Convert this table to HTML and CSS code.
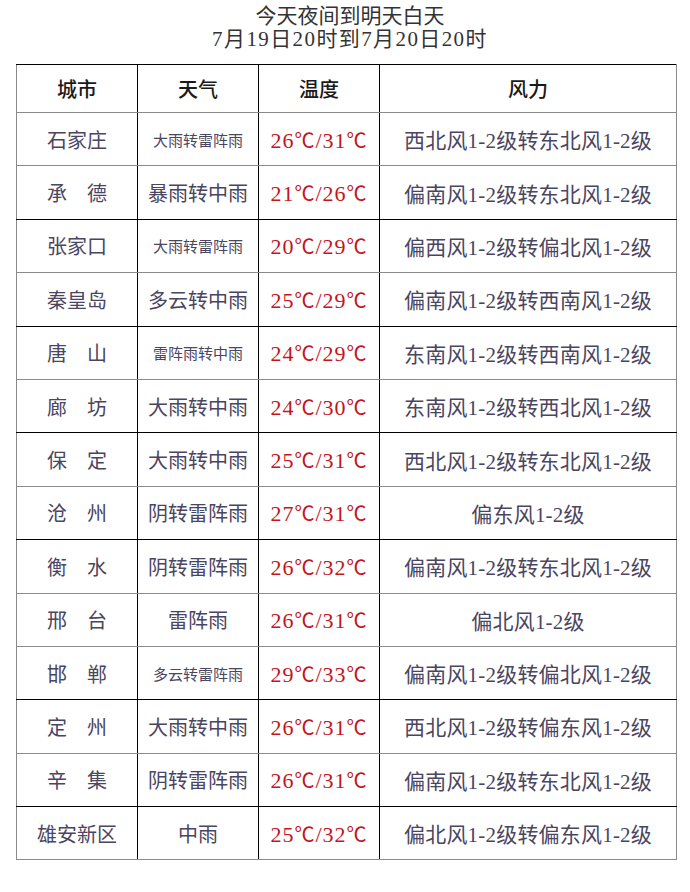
FILE: index.html
```html
<!DOCTYPE html>
<html lang="zh-CN">
<head>
<meta charset="utf-8">
<title>今天夜间到明天白天</title>
<link rel="stylesheet" href="styles.css">
</head>
<body>
<div class="page">
  <div class="title">
    <div>今天夜间到明天白天</div>
    <div class="date">7月19日20时到7月20日20时</div>
  </div>
  <table class="forecast">
    <thead>
      <tr class="head"><th>城市</th><th>天气</th><th>温度</th><th>风力</th></tr>
    </thead>
    <tbody>
      <tr><td class="city">石家庄</td><td class="wx small">大雨转雷阵雨</td><td class="temp">26<span class="deg">℃</span>/31<span class="deg">℃</span></td><td class="wind">西北风1-2级转东北风1-2级</td></tr>
      <tr class="dark"><td class="city">承　德</td><td class="wx">暴雨转中雨</td><td class="temp">21<span class="deg">℃</span>/26<span class="deg">℃</span></td><td class="wind">偏南风1-2级转东北风1-2级</td></tr>
      <tr><td class="city">张家口</td><td class="wx small">大雨转雷阵雨</td><td class="temp">20<span class="deg">℃</span>/29<span class="deg">℃</span></td><td class="wind">偏西风1-2级转偏北风1-2级</td></tr>
      <tr class="dark"><td class="city">秦皇岛</td><td class="wx">多云转中雨</td><td class="temp">25<span class="deg">℃</span>/29<span class="deg">℃</span></td><td class="wind">偏南风1-2级转西南风1-2级</td></tr>
      <tr><td class="city">唐　山</td><td class="wx small">雷阵雨转中雨</td><td class="temp">24<span class="deg">℃</span>/29<span class="deg">℃</span></td><td class="wind">东南风1-2级转西南风1-2级</td></tr>
      <tr class="dark"><td class="city">廊　坊</td><td class="wx">大雨转中雨</td><td class="temp">24<span class="deg">℃</span>/30<span class="deg">℃</span></td><td class="wind">东南风1-2级转西北风1-2级</td></tr>
      <tr><td class="city">保　定</td><td class="wx">大雨转中雨</td><td class="temp">25<span class="deg">℃</span>/31<span class="deg">℃</span></td><td class="wind">西北风1-2级转东北风1-2级</td></tr>
      <tr class="dark"><td class="city">沧　州</td><td class="wx">阴转雷阵雨</td><td class="temp">27<span class="deg">℃</span>/31<span class="deg">℃</span></td><td class="wind">偏东风1-2级</td></tr>
      <tr><td class="city">衡　水</td><td class="wx">阴转雷阵雨</td><td class="temp">26<span class="deg">℃</span>/32<span class="deg">℃</span></td><td class="wind">偏南风1-2级转东北风1-2级</td></tr>
      <tr><td class="city">邢　台</td><td class="wx">雷阵雨</td><td class="temp">26<span class="deg">℃</span>/31<span class="deg">℃</span></td><td class="wind">偏北风1-2级</td></tr>
      <tr class="dark"><td class="city">邯　郸</td><td class="wx small">多云转雷阵雨</td><td class="temp">29<span class="deg">℃</span>/33<span class="deg">℃</span></td><td class="wind">偏南风1-2级转偏北风1-2级</td></tr>
      <tr><td class="city">定　州</td><td class="wx">大雨转中雨</td><td class="temp">26<span class="deg">℃</span>/31<span class="deg">℃</span></td><td class="wind">西北风1-2级转偏东风1-2级</td></tr>
      <tr class="dark"><td class="city">辛　集</td><td class="wx">阴转雷阵雨</td><td class="temp">26<span class="deg">℃</span>/31<span class="deg">℃</span></td><td class="wind">偏南风1-2级转东北风1-2级</td></tr>
      <tr><td class="city">雄安新区</td><td class="wx">中雨</td><td class="temp">25<span class="deg">℃</span>/32<span class="deg">℃</span></td><td class="wind">偏北风1-2级转偏东风1-2级</td></tr>
    </tbody>
  </table>
</div>
</body>
</html>
```

FILE: styles.css
```css
html, body {
  margin: 0;
  padding: 0;
  background: #ffffff;
}

.page {
  width: 690px;
  height: 892px;
  font-family: "Noto Sans CJK SC", "Liberation Sans", sans-serif;
}

.title {
  padding: 5px 0 0 10px;
  text-align: center;
  font-family: "Liberation Serif", "Noto Sans CJK SC", serif;
  font-size: 21px;
  line-height: 23px;
  color: #333333;
}

.title .date {
  letter-spacing: 1.4px;
}

.forecast {
  margin: 13px 0 0 16px;
  border-collapse: collapse;
  table-layout: fixed;
  width: 661px;
}

.forecast th,
.forecast td {
  padding: 0;
  text-align: center;
  vertical-align: middle;
  border-left: 1px solid #000000;
  border-bottom: 1px solid #8a8a8a;
}

.forecast th:first-child,
.forecast td:first-child {
  border-left-color: #8a8a8a;
  width: 120px;
}

.forecast th:nth-child(2),
.forecast td:nth-child(2),
.forecast th:nth-child(3),
.forecast td:nth-child(3) {
  width: 120px;
}

.forecast th:last-child,
.forecast td:last-child {
  border-right: 1px solid #8a8a8a;
}

.forecast th {
  border-top: 1px solid #000000;
  height: 47px;
  font-size: 20px;
  font-weight: 500;
  color: #1a1a1a;
}

.forecast tbody tr {
  height: 53.4px;
}

.forecast tr.dark td {
  border-bottom-color: #000000;
}

.city {
  font-size: 20px;
  color: #4a4560;
}

.wx {
  font-size: 20px;
  color: #4a4560;
}

.wx.small {
  font-size: 15px;
}

.temp {
  font-family: "Liberation Serif", "Noto Sans CJK SC", serif;
  font-size: 22px;
  letter-spacing: 1px;
  color: #c4141c;
  white-space: nowrap;
}

.deg {
  font-family: "Noto Sans CJK SC", sans-serif;
  font-size: 20px;
}

.wind {
  font-family: "Liberation Serif", "Noto Sans CJK SC", serif;
  font-size: 21px;
  letter-spacing: 0.2px;
  color: #4a4560;
}
```
